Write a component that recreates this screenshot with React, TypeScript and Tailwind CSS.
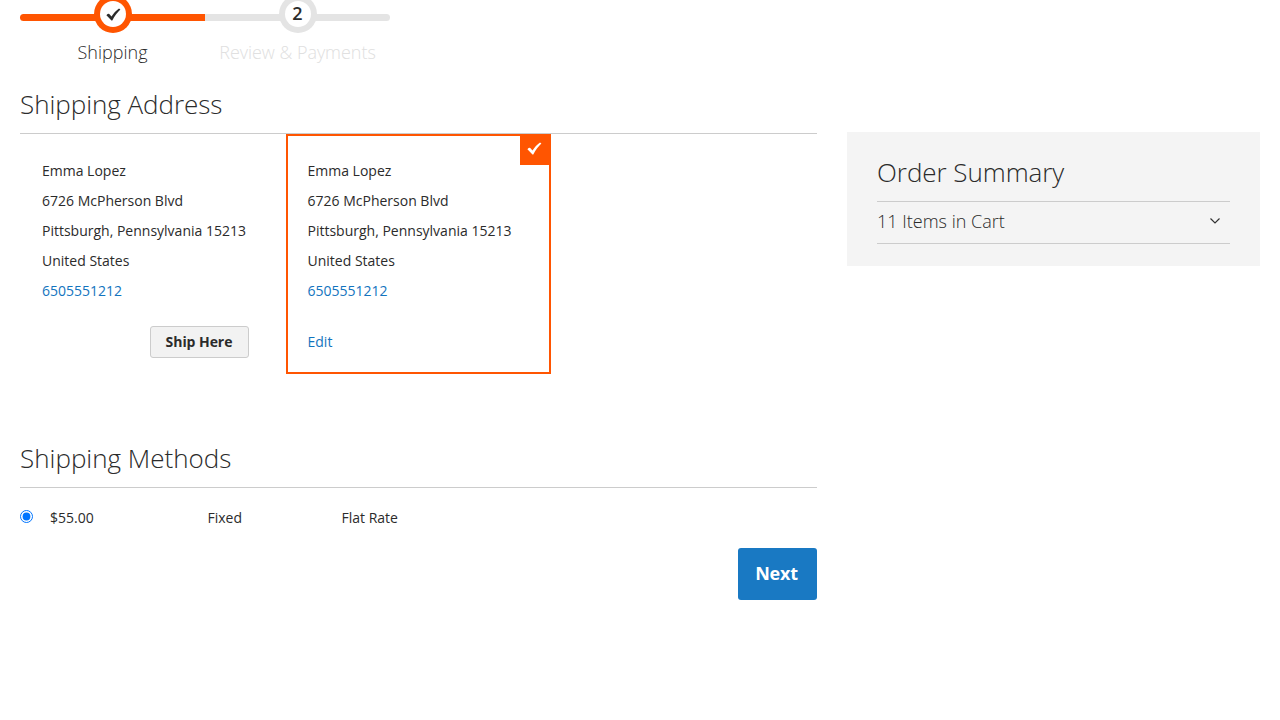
function Check({ className }: { className: string }) {
  return (
    <svg viewBox="0 0 15 13" className={className} fill="currentColor">
      <path d="M.4 7.2C1.6 5.9 3 5.4 3.7 6.4L5.5 8.6C7.6 5.4 10 2.6 13 .6L14.4 1.6C11 4.7 8.7 8.2 6.3 12.4 5.8 12.6 5.3 12.5 5 12Z" />
    </svg>
  );
}

function AddressLines() {
  return (
    <>
      <div>Emma Lopez</div>
      <div>6726 McPherson Blvd</div>
      <div>Pittsburgh, Pennsylvania 15213</div>
      <div>United States</div>
      <a href="#" className="block text-[#1374be]">6505551212</a>
    </>
  );
}

export default function App() {
  return (
    <div className="h-[720px] overflow-hidden bg-white px-5 font-['Open_Sans',sans-serif] text-[14px] leading-[30px] text-[#2b2b2b]">
      <ul className="flex h-[89px] text-center text-[18px] leading-[25px] font-light">
        <li className="relative w-[185px] pt-10">
          <div className="absolute top-[14px] left-0 h-[7px] w-full rounded-l-md bg-[#ff5501]" />
          <div className="absolute top-[-5px] left-[74px] flex size-[38px] items-center justify-center rounded-full bg-[#ff5501]">
            <div className="flex size-[26px] items-center justify-center rounded-full bg-white pt-px pl-px">
              <Check className="h-[13px] w-[15px]" />
            </div>
          </div>
          Shipping
        </li>
        <li className="relative w-[185px] pt-10 tracking-[-0.04px] text-[#e0e0e0]">
          <div className="absolute top-[14px] left-0 h-[7px] w-full rounded-r-md bg-[#e4e4e4]" />
          <div className="absolute top-[-5px] left-[74px] flex size-[38px] items-center justify-center rounded-full bg-[#e4e4e4]">
            <div className="flex size-[26px] items-center justify-center rounded-full bg-white pr-px pb-[2px] font-semibold text-[#2b2b2b]">2</div>
          </div>
          Review &amp; Payments
        </li>
      </ul>
      <div className="flex items-start justify-between">
        <main className="w-[797px]">
          <h2 className="h-[45px] border-b border-[#ccc] text-[26px] leading-[30px] font-light tracking-[-0.04px]">Shipping Address</h2>
          <div className="flex h-[240px]">
            <div className="w-[266px] pt-[22px] pl-[22px]">
              <AddressLines />
              <div className="flex justify-end pt-5 pr-[37px]">
                <button className="h-8 w-[99px] rounded-[3px] border border-[#ccc] bg-[#f2f2f2] pr-px leading-4 font-bold tracking-[-0.06px]">Ship Here</button>
              </div>
            </div>
            <div className="relative w-[265px] border-2 border-[#ff5501] pt-5 pl-[19.5px]">
              <AddressLines />
              <a href="#" className="mt-[21px] block text-[#1374be]">Edit</a>
              <div className="absolute top-[-2px] right-[-2px] flex h-[31px] w-[31px] items-center justify-center bg-[#ff5501] pr-[2px] pb-[3px] text-white">
                <Check className="h-[13px] w-[15px]" />
              </div>
            </div>
          </div>
          <h2 className="mt-[69px] h-[45px] border-b border-[#ccc] text-[26px] leading-[30px] font-light">Shipping Methods</h2>
          <div className="flex h-[60px] items-center">
            <input type="radio" defaultChecked className="mr-[17px] mb-[3px] size-[13px]" />
            <div className="w-[157.5px]">$55.00</div>
            <div className="w-[134px]">Fixed</div>
            <div>Flat Rate</div>
          </div>
          <div className="flex justify-end">
            <button className="h-[52px] w-[79px] rounded-[3px] bg-[#1979c3] pr-[2px] pb-[2px] text-[18px] font-bold tracking-[-0.2px] text-white">Next</button>
          </div>
        </main>
        <aside className="mt-[43px] h-[134px] w-[413px] bg-[#f4f4f4] px-[30px] pt-[22px]">
          <div className="h-[48px] border-b border-[#ccc] text-[26px] leading-[36px] font-light tracking-[-0.05px]">Order Summary</div>
          <div className="flex h-[42px] items-center justify-between border-b border-[#ccc] pr-[10px] pb-[3px] text-[18px] font-light">
            11 Items in Cart
            <svg viewBox="0 0 10 6" className="h-[6px] w-[10px]" fill="none" stroke="#333" strokeWidth="1.2"><path d="M.5.5 5 5 9.5.5" /></svg>
          </div>
        </aside>
      </div>
    </div>
  );
}
